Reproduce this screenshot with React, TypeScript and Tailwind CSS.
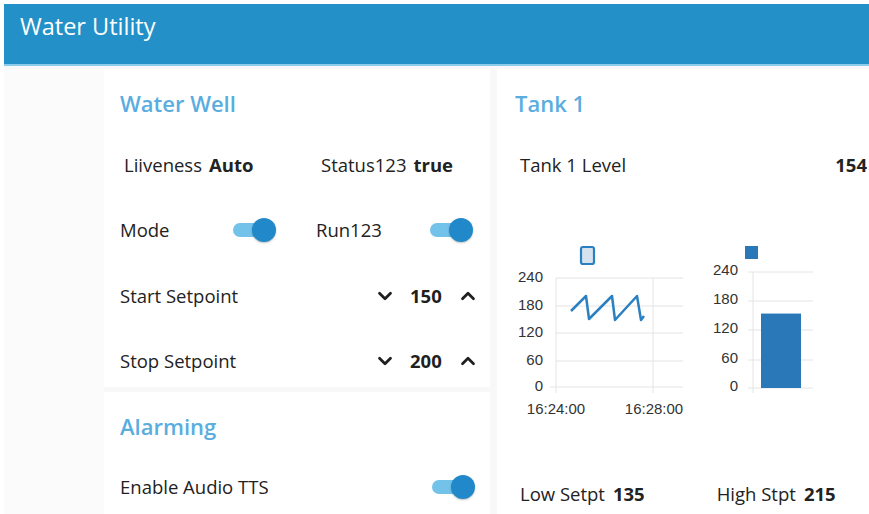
import { ChevronDown, ChevronUp } from 'lucide-react';

const UI_FONT = "font-['Open_Sans','Noto_Sans',sans-serif]";

function Toggle() {
  return (
    <span className="relative inline-block h-[24px] w-[43px]">
      <span className="absolute left-0 top-[5px] h-[14px] w-[34px] rounded-full bg-[#72c2ea]" />
      <span className="absolute right-0 top-0 h-[24px] w-[24px] rounded-full bg-[#2189c9] shadow-[0_1px_2px_rgba(0,0,0,0.25)]" />
    </span>
  );
}

function Stepper({ value }: { value: number }) {
  return (
    <div className="-mr-[4px] flex items-center">
      <ChevronDown className="h-[22px] w-[22px] text-[#1f1f1f]" strokeWidth={3} />
      <span className="ml-[14px] w-[38px] font-bold text-[#1f1f1f]">{value}</span>
      <ChevronUp className="ml-[9px] h-[22px] w-[22px] text-[#1f1f1f]" strokeWidth={3} />
    </div>
  );
}

function CardTitle({ children }: { children: React.ReactNode }) {
  return <h2 className="text-[22px] font-semibold text-[#5aaddf]">{children}</h2>;
}

const LINE_GRID = [38, 66, 93, 121, 147];
const LINE_LABELS = ['240', '180', '120', '60', '0'];
const LEVEL_TRACE = '61,71 76,56 79,79 102,56 105,80 127,56 131,80 134,76';

function LevelTrend() {
  return (
    <svg width={180} height={180} className="font-['Liberation_Sans',Arial,sans-serif]">
      <rect x={71} y={7} width={13} height={17} rx={2} fill="#d6e3ee" stroke="#2a80c0" strokeWidth={2.2} />
      {LINE_GRID.map((y, i) => (
        <g key={y}>
          <line x1={i === 4 ? 40 : 46} x2={173} y1={y} y2={y} stroke="#e4e4e4" />
          <text x={33} y={y} textAnchor="end" dominantBaseline="middle" fontSize={15} fill="#333">
            {LINE_LABELS[i]}
          </text>
        </g>
      ))}
      <line x1={46} x2={46} y1={38} y2={153} stroke="#e4e4e4" />
      <line x1={143} x2={143} y1={38} y2={153} stroke="#e4e4e4" />
      <text x={46} y={170} textAnchor="middle" dominantBaseline="middle" fontSize={15} fill="#333">
        16:24:00
      </text>
      <text x={144} y={170} textAnchor="middle" dominantBaseline="middle" fontSize={15} fill="#333">
        16:28:00
      </text>
      <polyline points={LEVEL_TRACE} fill="none" stroke="#2a80c0" strokeWidth={2.5} strokeLinejoin="round" />
    </svg>
  );
}

const BAR_GRID = [32, 61, 90, 120, 148];

function LevelBar({ level }: { level: number }) {
  // 0..240 maps onto the plot height between y=148 and y=32
  const top = 148 - (level / 240) * (148 - 32);
  return (
    <svg width={125} height={160} className="font-['Liberation_Sans',Arial,sans-serif]">
      <rect x={45} y={6} width={13} height={13} fill="#2a78b8" />
      {BAR_GRID.map((y, i) => (
        <g key={y}>
          <line x1={48} x2={113} y1={y} y2={y} stroke="#e4e4e4" />
          <text x={38} y={y - 1} textAnchor="end" dominantBaseline="middle" fontSize={15} fill="#333">
            {LINE_LABELS[i]}
          </text>
        </g>
      ))}
      <line x1={53} x2={53} y1={32} y2={153} stroke="#e4e4e4" />
      <rect x={61} y={top} width={40} height={148 - top} fill="#2a78b8" />
    </svg>
  );
}

export default function App() {
  return (
    <div className={`h-[514px] w-[869px] overflow-hidden bg-white pl-[4px] pt-[4px] ${UI_FONT} text-[18.5px] text-[#222]`}>
      <header className="flex h-[62px] items-start border-b-2 border-[#8ccbea] bg-[#2391c8] pl-[16px] pt-[5px]">
        <h1 className="text-[23.5px] text-white">Water Utility</h1>
      </header>

      <div className="flex h-[448px] bg-[#f8f8f8] pt-[3px]">
        <div className="w-[100px] shrink-0 bg-[#fbfbfb]" />

        <div className="flex w-[386px] shrink-0 flex-col gap-[5px]">
          <section className="bg-white pl-[16px] pr-[15px]">
            <div className="flex h-[64px] items-center pt-[4px]">
              <CardTitle>Water Well</CardTitle>
            </div>
            <div className="grid h-[64px] grid-cols-[196px_1fr] items-center">
              <div className="flex pl-[4px]">
                <span>Liiveness</span>
                <span className="ml-[7px] font-bold">Auto</span>
              </div>
              <div className="flex pl-[5px]">
                <span>Status123</span>
                <span className="ml-[7px] font-bold">true</span>
              </div>
            </div>
            <div className="grid h-[66px] grid-cols-[196px_1fr] items-center">
              <div className="flex items-center">
                <span className="w-[113px]">Mode</span>
                <Toggle />
              </div>
              <div className="flex items-center">
                <span className="w-[114px]">Run123</span>
                <Toggle />
              </div>
            </div>
            <div className="flex h-[66px] items-center justify-between">
              <span>Start Setpoint</span>
              <Stepper value={150} />
            </div>
            <div className="flex h-[58px] items-center justify-between pt-[6px]">
              <span>Stop Setpoint</span>
              <Stepper value={200} />
            </div>
          </section>

          <section className="flex-1 bg-white pl-[16px] pr-[15px]">
            <div className="flex h-[66px] items-center pt-[2px]">
              <CardTitle>Alarming</CardTitle>
            </div>
            <div className="flex h-[58px] items-center justify-between">
              <span>Enable Audio TTS</span>
              <Toggle />
            </div>
          </section>
        </div>

        <section className="ml-[7px] w-[380px] shrink-0 bg-white pr-[10px]">
          <div className="flex h-[64px] items-center pl-[18px] pt-[4px]">
            <CardTitle>Tank 1</CardTitle>
          </div>
          <div className="flex h-[64px] items-center justify-between pl-[23px]">
            <span>Tank 1 Level</span>
            <span className="font-bold">154</span>
          </div>
          <div className="flex h-[273px] pl-[13px] pt-[43px]">
            <LevelTrend />
            <div className="ml-[10px]">
              <LevelBar level={154} />
            </div>
          </div>
          <div className="flex h-[48px] items-center pl-[23px]">
            <span>Low Setpt</span>
            <span className="ml-[8px] font-bold">135</span>
            <span className="ml-[72px]">High Stpt</span>
            <span className="ml-[8px] font-bold">215</span>
          </div>
        </section>
      </div>
    </div>
  );
}
